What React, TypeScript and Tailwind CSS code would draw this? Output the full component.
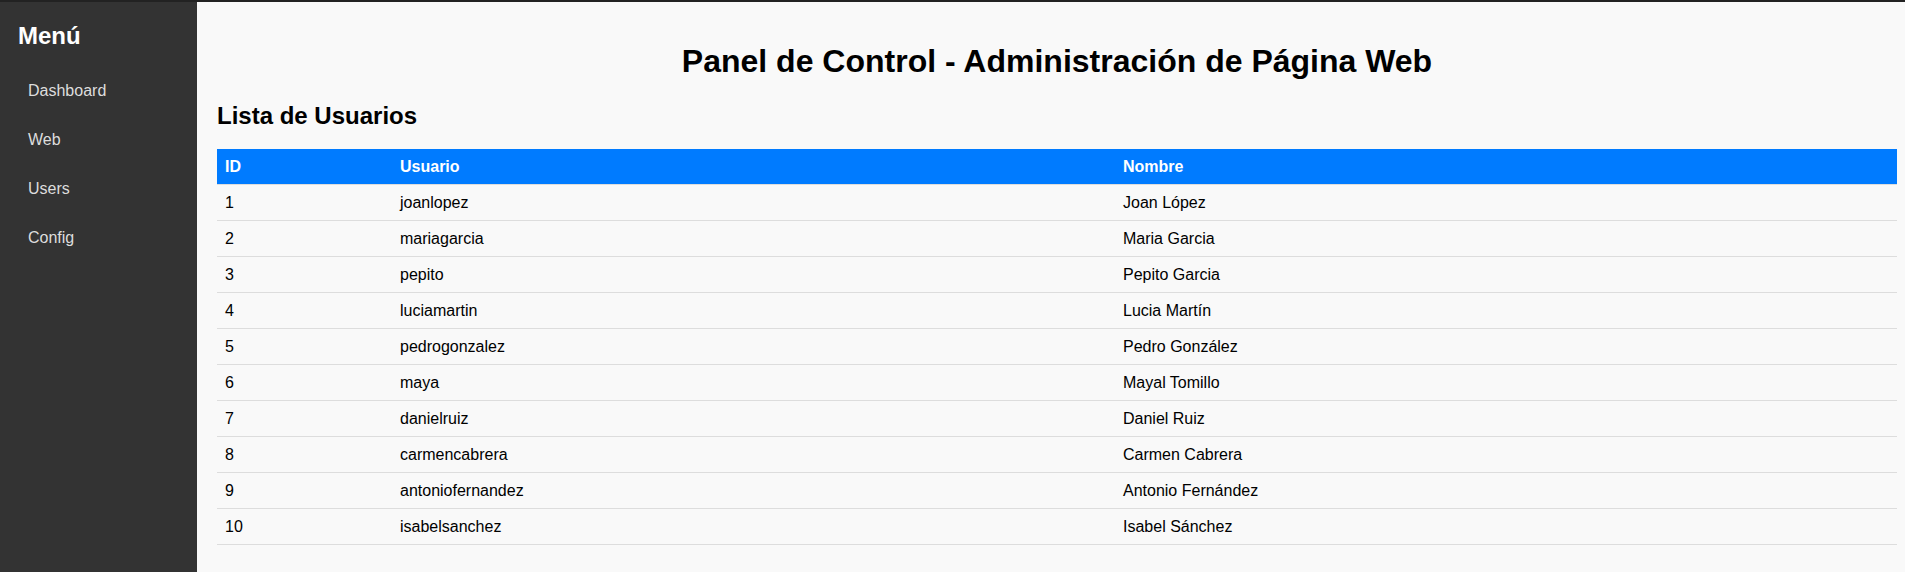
const menu = ["Dashboard", "Web", "Users", "Config"]

const users = [
  { id: 1, usuario: "joanlopez", nombre: "Joan López" },
  { id: 2, usuario: "mariagarcia", nombre: "Maria Garcia" },
  { id: 3, usuario: "pepito", nombre: "Pepito Garcia" },
  { id: 4, usuario: "luciamartin", nombre: "Lucia Martín" },
  { id: 5, usuario: "pedrogonzalez", nombre: "Pedro González" },
  { id: 6, usuario: "maya", nombre: "Mayal Tomillo" },
  { id: 7, usuario: "danielruiz", nombre: "Daniel Ruiz" },
  { id: 8, usuario: "carmencabrera", nombre: "Carmen Cabrera" },
  { id: 9, usuario: "antoniofernandez", nombre: "Antonio Fernández" },
  { id: 10, usuario: "isabelsanchez", nombre: "Isabel Sánchez" },
]

export default function App() {
  return (
    <div className="flex h-screen border-t-2 border-[#222] font-['Liberation_Sans',Arial,sans-serif] text-[16px]">
      {/* Sidebar */}
      <aside className="w-[197px] shrink-0 bg-[#333] px-[18px] pt-5">
        <h2 className="mb-4 text-[24px] font-bold leading-[27.6px] text-white">Menú</h2>
        <ul>
          {menu.map((item) => (
            <li key={item}>
              <a href="#" className="block py-[15px] pl-[10px] leading-[19px] text-[#ddd]">
                {item}
              </a>
            </li>
          ))}
        </ul>
      </aside>

      {/* Main */}
      <main className="flex-1 bg-[#f9f9f9] pl-5 pr-2 pt-5 text-black">
        <h1 className="my-[21.44px] text-center text-[32px] font-bold leading-[36.8px]">
          Panel de Control - Administración de Página Web
        </h1>
        <h2 className="my-[19.92px] text-[24px] font-bold leading-[27.6px]">Lista de Usuarios</h2>

        <table className="w-full table-fixed border-collapse">
          <thead>
            <tr>
              <th className="w-[175px] border-b border-[#ddd] bg-[#007bff] px-2 py-2 text-left font-bold leading-[19px] text-white">ID</th>
              <th className="w-[723px] border-b border-[#ddd] bg-[#007bff] px-2 py-2 text-left font-bold leading-[19px] text-white">Usuario</th>
              <th className="border-b border-[#ddd] bg-[#007bff] px-2 py-2 text-left font-bold leading-[19px] text-white">Nombre</th>
            </tr>
          </thead>
          <tbody>
            {users.map((u) => (
              <tr key={u.id}>
                <td className="border-b border-[#ddd] px-2 py-2 leading-[19px]">{u.id}</td>
                <td className="border-b border-[#ddd] px-2 py-2 leading-[19px]">{u.usuario}</td>
                <td className="border-b border-[#ddd] px-2 py-2 leading-[19px]">{u.nombre}</td>
              </tr>
            ))}
          </tbody>
        </table>
      </main>
    </div>
  )
}
